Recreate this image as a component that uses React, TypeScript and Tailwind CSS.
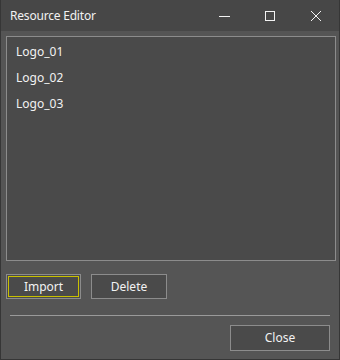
import React from 'react';

const items = ['Logo_01', 'Logo_02', 'Logo_03'];

const App: React.FC = () => {
  return (
    <div
      className="w-[340px] h-[360px] flex flex-col bg-[#555555] border border-t-0 border-[#363636] text-[#f2f2f2] text-[12px]"
      style={{ fontFamily: '"Noto Sans", "Open Sans", sans-serif' }}
    >
      {/* title bar */}
      <div className="h-[31px] bg-[#474747] flex items-center pl-[9px]">
        <span className="flex-1 tracking-[-0.2px]">Resource Editor</span>
        <div className="flex items-center h-full">
          <div className="w-[46px] h-full flex items-center justify-center">
            <svg width="12" height="12" viewBox="0 0 12 12">
              <line x1="1" y1="6.5" x2="12" y2="6.5" stroke="#f2f2f2" strokeWidth="1" />
            </svg>
          </div>
          <div className="w-[46px] h-full flex items-center justify-center">
            <svg width="12" height="12" viewBox="0 0 12 12">
              <rect x="1.5" y="1.5" width="9" height="9" fill="none" stroke="#f2f2f2" strokeWidth="1" />
            </svg>
          </div>
          <div className="w-[46px] h-full flex items-center justify-center">
            <svg width="12" height="12" viewBox="0 0 12 12">
              <path d="M1 1 L11 11 M11 1 L1 11" stroke="#f2f2f2" strokeWidth="1" />
            </svg>
          </div>
        </div>
      </div>

      {/* body */}
      <div className="flex-1 flex flex-col pl-[5px] pt-[5px]">
        <div className="w-[330px] h-[225px] border border-[#8c8c8c] bg-[#4a4a4a] pt-[2px]">
          {items.map((it) => (
            <div key={it} className="h-[26px] flex items-center pl-[9px]">
              {it}
            </div>
          ))}
        </div>

        <div className="flex gap-[10px] mt-[13px]">
          <button className="w-[75px] h-[25px] border border-[#8c8c8c] bg-[#4a4a4a] p-[1px]">
            <div className="w-full h-full border border-dotted border-[#e0d400] flex items-center justify-center outline outline-1 outline-[#c8c000] -outline-offset-1">
              Import
            </div>
          </button>
          <button className="w-[76px] h-[25px] border border-[#8c8c8c] bg-[#4a4a4a] flex items-center justify-center">
            Delete
          </button>
        </div>

        <div className="ml-[4px] w-[320px] h-px bg-[#9a9a9a] mt-[16px]" />

        <div className="flex justify-end pr-[9px] mt-[9px]">
          <button className="w-[100px] h-[26px] border border-[#8c8c8c] bg-[#4a4a4a] flex items-center justify-center">
            Close
          </button>
        </div>
      </div>
    </div>
  );
};

export default App;
